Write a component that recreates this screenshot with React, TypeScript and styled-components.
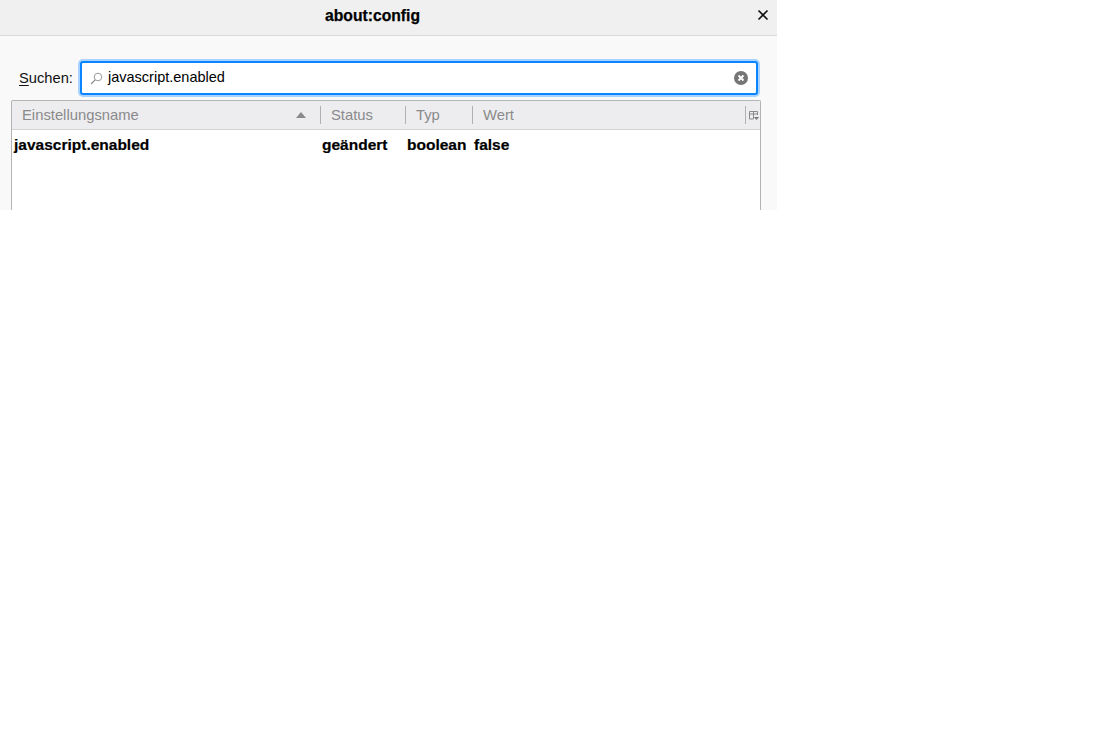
import React from "react";
import styled, { createGlobalStyle } from "styled-components";

const Global = createGlobalStyle`
  html, body { margin: 0; padding: 0; background: #fff; }
  body { font-family: "Liberation Sans", Arial, sans-serif; }
`;

const Dialog = styled.div`
  width: 777px;
  height: 210px;
  overflow: hidden;
  background: #f9f9f9;
  display: flex;
  flex-direction: column;
`;

const TitleBar = styled.header`
  height: 35px;
  flex: none;
  background: #f0f0f0;
  border-bottom: 1px solid #d9d9d9;
  display: flex;
  align-items: center;
  justify-content: center;
  padding-right: 32px;
  position: relative;
`;

const Title = styled.h1`
  margin: 0 0 4px 0;
  font-size: 15.7px;
  font-weight: 700;
  color: #000;
  -webkit-text-stroke: 0.25px #000;
`;

const CloseButton = styled.span`
  position: absolute;
  right: 8px;
  top: 9px;
  width: 12px;
  height: 12px;
  display: flex;
`;

const SearchRow = styled.div`
  display: flex;
  align-items: flex-end;
  margin-top: 25px;
  padding-left: 19px;
  height: 34px;
`;

const SearchLabel = styled.label`
  font-size: 14.7px;
  color: #111;
  width: 61px;
  flex: none;
  margin-bottom: 9px;
  u { text-underline-offset: 2px; }
`;

const SearchBox = styled.div`
  flex: none;
  box-sizing: border-box;
  width: 678px;
  height: 34px;
  background: #fff;
  border: 2px solid #0a84ff;
  border-radius: 3px;
  box-shadow: 0 0 0 2px #a8d2ff;
  display: flex;
  align-items: center;
  padding: 0 8px 0 8px;
`;

const SearchValue = styled.span`
  flex: 1;
  margin: 0 0 3px 5px;
  font-size: 14.5px;
  color: #000;
`;

const TreePanel = styled.section`
  margin: 5px 16px 0 11px;
  flex: 1;
  background: #fff;
  border: 1px solid #b4b4b4;
  border-bottom: none;
  border-radius: 2px 2px 0 0;
`;

const HeaderRow = styled.div`
  height: 28px;
  background: #ededf0;
  border-bottom: 1px solid #d3d3d3;
  display: flex;
  align-items: center;
`;

const HeaderCell = styled.div<{ $w: number; $first?: boolean }>`
  width: ${(p) => p.$w}px;
  flex: none;
  box-sizing: border-box;
  height: 18px;
  line-height: 18px;
  font-size: 14.8px;
  color: #8a8a8a;
  padding-left: 10px;
  border-left: ${(p) => (p.$first ? "none" : "1px solid #b1b1b1")};
  display: flex;
  align-items: center;
  justify-content: space-between;
`;

const SortArrow = styled.span`
  width: 0;
  height: 0;
  margin-right: 14px;
  border-left: 5px solid transparent;
  border-right: 5px solid transparent;
  border-bottom: 6px solid #8a8a8a;
`;

const PickerCell = styled.div`
  flex: none;
  width: 15px;
  height: 18px;
  box-sizing: border-box;
  border-left: 1px solid #b1b1b1;
  display: flex;
  align-items: center;
  justify-content: center;
`;

const DataRow = styled.div`
  display: flex;
  margin-top: 6px;
  height: 18px;
  align-items: center;
`;

const DataCell = styled.div<{ $w: number }>`
  width: ${(p) => p.$w}px;
  flex: none;
  box-sizing: border-box;
  padding-left: 2px;
  font-size: 15.5px;
  font-weight: 700;
  color: #000;
  white-space: nowrap;
  -webkit-text-stroke: 0.2px #000;
`;

export default function App() {
  return (
    <>
      <Global />
      <Dialog>
        <TitleBar>
          <Title>about:config</Title>
          <CloseButton>
            <svg width="12" height="12" viewBox="0 0 12 12">
              <path d="M1.5 1.5 L10.5 10.5 M10.5 1.5 L1.5 10.5" stroke="#111" strokeWidth="1.6" fill="none" />
            </svg>
          </CloseButton>
        </TitleBar>
        <SearchRow>
          <SearchLabel>
            <u>S</u>uchen:
          </SearchLabel>
          <SearchBox>
            <svg width="13" height="13" viewBox="0 0 13 13">
              <circle cx="8" cy="5" r="3.8" stroke="#9a9a9a" strokeWidth="1" fill="none" />
              <path d="M5.2 7.8 L1 12" stroke="#8a8a8a" strokeWidth="1.2" fill="none" />
            </svg>
            <SearchValue>javascript.enabled</SearchValue>
            <svg width="14" height="14" viewBox="0 0 14 14">
              <circle cx="7" cy="7" r="7" fill="#757575" />
              <path d="M4.5 4.5 L9.5 9.5 M9.5 4.5 L4.5 9.5" stroke="#fff" strokeWidth="1.8" fill="none" />
            </svg>
          </SearchBox>
        </SearchRow>
        <TreePanel>
          <HeaderRow>
            <HeaderCell $w={308} $first>
              Einstellungsname
              <SortArrow />
            </HeaderCell>
            <HeaderCell $w={85}>Status</HeaderCell>
            <HeaderCell $w={67}>Typ</HeaderCell>
            <HeaderCell $w={273}>Wert</HeaderCell>
            <PickerCell>
              <svg width="11" height="11" viewBox="0 0 11 11">
                <path d="M1.5 1.5 H9.5 V5 M1.5 1.5 V9 H5.5 M1.5 4 H9.5 M5.5 1.5 V9" stroke="#8a8a8a" strokeWidth="1" fill="none" />
                <path d="M6 7 H11 L8.5 10 Z" fill="#777" />
              </svg>
            </PickerCell>
          </HeaderRow>
          <DataRow>
            <DataCell $w={308}>javascript.enabled</DataCell>
            <DataCell $w={85}>geändert</DataCell>
            <DataCell $w={67}>boolean</DataCell>
            <DataCell $w={100}>false</DataCell>
          </DataRow>
        </TreePanel>
      </Dialog>
    </>
  );
}
